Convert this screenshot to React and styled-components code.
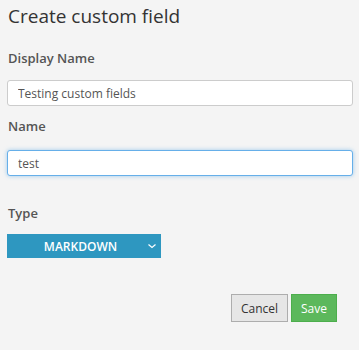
import React from "react";
import styled, { createGlobalStyle } from "styled-components";

const GlobalStyle = createGlobalStyle`
  html, body {
    margin: 0;
    padding: 0;
    background: #f4f4f4;
  }
  body {
    font-family: "Open Sans", "Liberation Sans", sans-serif;
  }
`;

const Panel = styled.div`
  width: 359px;
  height: 350px;
  box-sizing: border-box;
  padding: 3px 6px 0 7px;
  background: #f4f4f4;
  display: flex;
  flex-direction: column;
`;

const Title = styled.h2`
  margin: 0 0 0 1px;
  font-size: 19px;
  font-weight: 400;
  color: #333;
  line-height: 26px;
`;

const Label = styled.label`
  display: block;
  margin: ${(p) => p.$top}px 0 0 1px;
  font-size: 13px;
  font-weight: 600;
  color: #555;
  line-height: 18px;
`;

const Input = styled.input`
  display: block;
  box-sizing: border-box;
  width: 346px;
  height: 26px;
  margin-top: ${(p) => p.$top}px;
  padding: 0 10px;
  font-family: inherit;
  font-size: 12px;
  color: #555;
  background: #fff;
  border: 1px solid ${(p) => (p.$focus ? "#66afe9" : "#ccc")};
  border-radius: 3px;
  box-shadow: ${(p) =>
    p.$focus ? "0 0 4px rgba(102, 175, 233, 0.6)" : "none"};
  outline: none;
`;

const Select = styled.div`
  margin-top: 12px;
  width: 154px;
  height: 24px;
  background: #2e97c0;
  color: #fff;
  display: flex;
  align-items: center;
  font-size: 12px;
  font-weight: 600;
  box-sizing: border-box;
  padding: 0 3px 0 0;
`;

const SelectText = styled.span`
  flex: 1;
  text-align: center;
  padding-left: 8px;
`;

const Actions = styled.div`
  display: flex;
  justify-content: flex-end;
  gap: 3px;
  margin-top: 36px;
  padding-right: 16px;
`;

const Button = styled.button`
  height: 28px;
  box-sizing: border-box;
  padding: 0 9px;
  font-family: inherit;
  font-size: 12px;
  border-radius: 0;
  border: 1px solid ${(p) => (p.$primary ? "#4cae4c" : "#adadad")};
  background: ${(p) => (p.$primary ? "#5cb85c" : "#e6e6e6")};
  color: ${(p) => (p.$primary ? "#fff" : "#333")};
`;

const Chevron = () => (
  <svg width="12" height="10" viewBox="0 0 12 10">
    <path d="M2.5 3.5 L6 6.5 L9.5 3.5" fill="none" stroke="#fff" strokeWidth="1.2" />
  </svg>
);

export default function App() {
  return (
    <>
      <GlobalStyle />
      <Panel>
        <Title>Create custom field</Title>
        <Label $top={20}>Display Name</Label>
        <Input $top={13} defaultValue="Testing custom fields" />
        <Label $top={11}>Name</Label>
        <Input $top={15} $focus defaultValue="test" />
        <Label $top={28}>Type</Label>
        <Select>
          <SelectText>MARKDOWN</SelectText>
          <Chevron />
        </Select>
        <Actions>
          <Button>Cancel</Button>
          <Button $primary>Save</Button>
        </Actions>
      </Panel>
    </>
  );
}
